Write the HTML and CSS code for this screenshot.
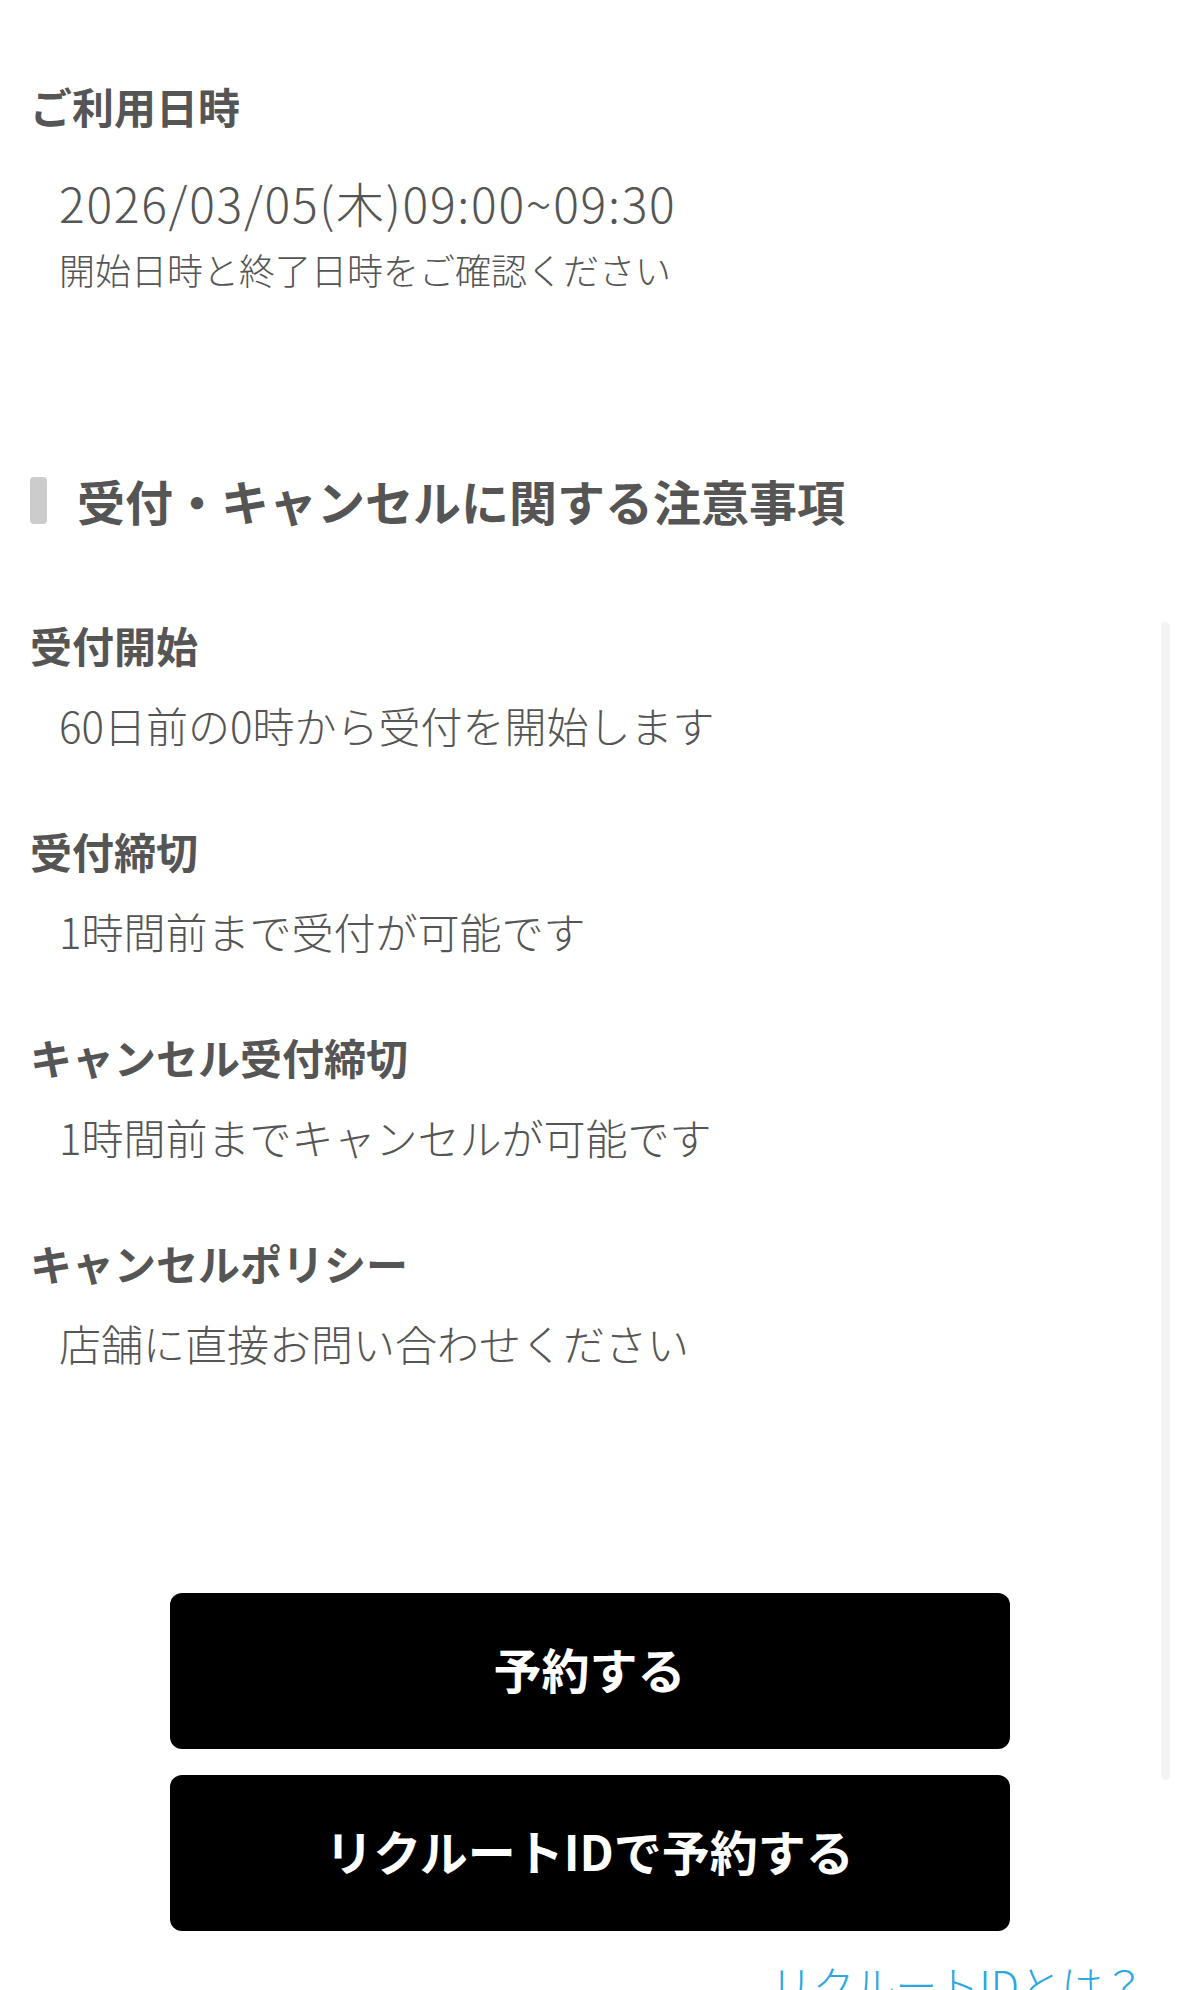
FILE: index.html
```html
<!DOCTYPE html>
<html lang="ja">
<head>
<meta charset="utf-8">
<title>予約確認</title>
<link rel="stylesheet" href="styles.css">
</head>
<body>
<main class="page">
  <section class="usage">
    <h3 class="label">ご利用日時</h3>
    <p class="date">2026/03/05(木)09:00~09:30</p>
    <p class="note">開始日時と終了日時をご確認ください</p>
  </section>

  <section class="notice">
    <h2 class="section-title"><span class="title-bar"></span><span>受付・キャンセルに関する注意事項</span></h2>
    <dl class="items">
      <div class="item">
        <dt class="label">受付開始</dt>
        <dd class="value">60日前の0時から受付を開始します</dd>
      </div>
      <div class="item">
        <dt class="label">受付締切</dt>
        <dd class="value">1時間前まで受付が可能です</dd>
      </div>
      <div class="item">
        <dt class="label">キャンセル受付締切</dt>
        <dd class="value">1時間前までキャンセルが可能です</dd>
      </div>
      <div class="item">
        <dt class="label">キャンセルポリシー</dt>
        <dd class="value">店舗に直接お問い合わせください</dd>
      </div>
    </dl>
  </section>

  <section class="actions">
    <button class="btn" type="button">予約する</button>
    <button class="btn" type="button">リクルートIDで予約する</button>
    <a class="id-link" href="#">リクルートIDとは？</a>
  </section>
</main>
<div class="scrollbar"></div>
</body>
</html>
```

FILE: styles.css
```css
html, body {
  margin: 0;
  padding: 0;
  background: #ffffff;
}

body {
  font-family: "Noto Sans CJK JP", "Noto Sans", sans-serif;
  color: #555555;
  position: relative;
  min-height: 1990px;
  overflow: hidden;
}

.page {
  display: flex;
  flex-direction: column;
  padding: 76px 0 0 30px;
}

h2, h3, p, dl, dd, dt {
  margin: 0;
}

.label {
  font-size: 42px;
  line-height: 59px;
  font-weight: 700;
  color: #555555;
}

.usage {
  display: flex;
  flex-direction: column;
}

.date {
  margin-top: 34px;
  padding-left: 29px;
  font-size: 48px;
  line-height: 67px;
  font-weight: 300;
  letter-spacing: 1.7px;
}

.note {
  margin-top: 8px;
  padding-left: 29px;
  font-size: 36px;
  line-height: 50px;
  font-weight: 300;
}

.notice {
  margin-top: 173px;
  display: flex;
  flex-direction: column;
}

.section-title {
  display: flex;
  align-items: center;
  gap: 30px;
  font-size: 48px;
  line-height: 67px;
  font-weight: 700;
  color: #555555;
}

.title-bar {
  width: 17px;
  height: 47px;
  border-radius: 4px;
  background: #cccccc;
  flex: none;
}

.items {
  margin-top: 81px;
  display: flex;
  flex-direction: column;
  gap: 67px;
}

.item {
  display: flex;
  flex-direction: column;
  gap: 21px;
}

.value {
  padding-left: 29px;
  font-size: 42px;
  line-height: 59px;
  font-weight: 300;
}

.actions {
  margin: 221px 0 0 -30px;
  display: flex;
  flex-direction: column;
  align-items: center;
  gap: 26px;
}

.btn {
  width: 840px;
  height: 156px;
  border: none;
  border-radius: 12px;
  background: #000000;
  color: #ffffff;
  font-family: "Noto Sans CJK JP", "Noto Sans", sans-serif;
  font-size: 48px;
  line-height: 67px;
  font-weight: 700;
  padding: 0 0 6px;
}

.id-link {
  align-self: flex-end;
  margin: -3px 34px 0 0;
  font-size: 42px;
  line-height: 59px;
  font-weight: 300;
  color: #2ba8e0;
  text-decoration: none;
}

.scrollbar {
  position: absolute;
  left: 1161px;
  top: 622px;
  width: 9px;
  height: 1158px;
  border-radius: 5px;
  background: #f4f4f4;
}
```
